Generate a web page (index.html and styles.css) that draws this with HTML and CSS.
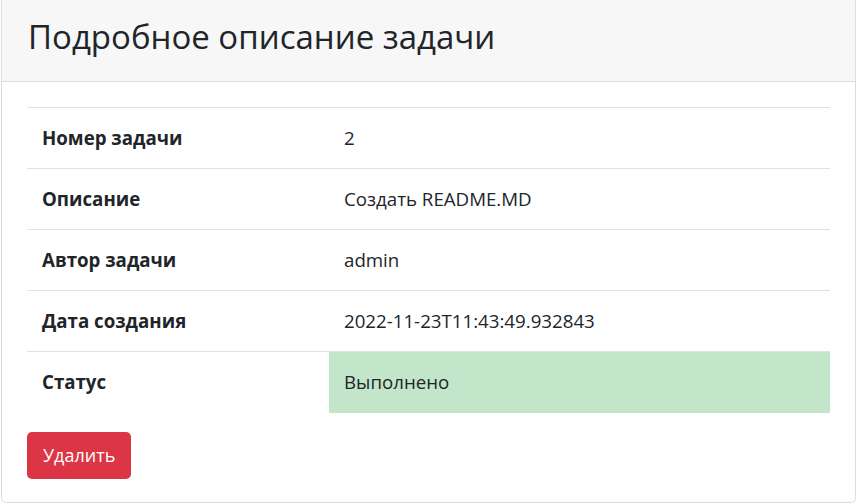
FILE: index.html
```html
<!DOCTYPE html>
<html lang="ru">
<head>
<meta charset="utf-8">
<title>Подробное описание задачи</title>
<link rel="stylesheet" href="styles.css">
</head>
<body>
<div class="card">
  <div class="card-header">
    <h2 class="title">Подробное описание задачи</h2>
  </div>
  <div class="card-body">
    <table class="table">
      <tbody>
        <tr><th>Номер задачи</th><td>2</td></tr>
        <tr><th>Описание</th><td>Создать README.MD</td></tr>
        <tr><th>Автор задачи</th><td>admin</td></tr>
        <tr><th>Дата создания</th><td>2022-11-23T11:43:49.932843</td></tr>
        <tr class="last"><th>Статус</th><td class="success">Выполнено</td></tr>
      </tbody>
    </table>
    <button class="btn-danger" type="button">Удалить</button>
  </div>
</div>
</body>
</html>
```
FILE: styles.css
```css
html, body {
  margin: 0;
  padding: 0;
  background: #ffffff;
}
body {
  padding: 0 1px;
  font-family: "Open Sans", "Noto Sans", sans-serif;
  font-size: 18.7px;
  color: #212529;
}
.card {
  border: 1px solid #dcdcdc;
  border-top: 0;
  border-radius: 0 0 5px 5px;
  background: #fff;
}
.card-header {
  background: #f7f7f7;
  border-bottom: 1px solid #dcdcdc;
  height: 82px;
  box-sizing: border-box;
  padding: 16px 26px 0;
}
.title {
  margin: 0;
  font-size: 33px;
  font-weight: 400;
  line-height: 42px;
  color: #212529;
}
.card-body {
  padding: 25px 25px 23px;
}
.table {
  width: 100%;
  border-collapse: collapse;
}
.table th,
.table td {
  text-align: left;
  padding: 17px 15px;
  line-height: 26px;
  border-top: 1px solid #dee2e6;
  vertical-align: top;
}
.table th {
  width: 272px;
  font-weight: 700;
}
.table td.success {
  background: #c3e6cb;
  padding-bottom: 18px;
}
.btn-danger {
  margin-top: 19px;
  display: block;
  height: 47px;
  padding: 0 16px;
  border: 0;
  border-radius: 5px;
  background: #dc3545;
  color: #fff;
  font-family: inherit;
  font-size: 18px;
  line-height: 47px;
  cursor: pointer;
}
```
